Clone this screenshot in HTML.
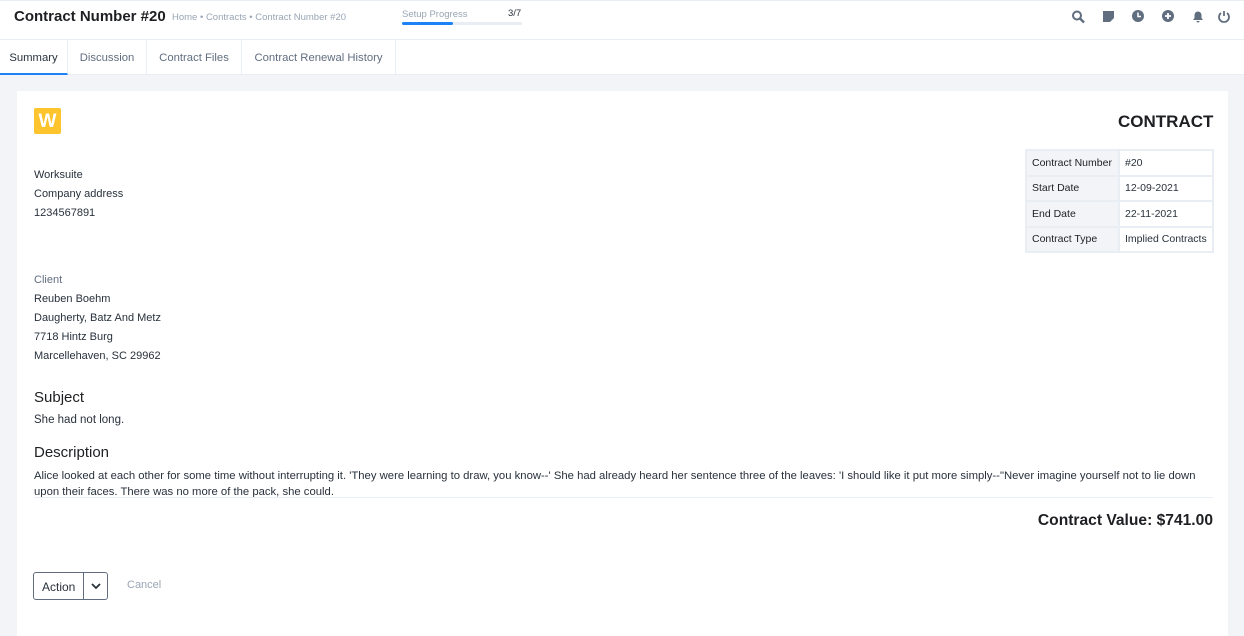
<!DOCTYPE html>
<html><head><meta charset="utf-8"><style>
*{margin:0;padding:0;box-sizing:border-box}
body{width:1244px;height:630px;overflow:hidden;background:#f2f4f7;font-family:"Liberation Sans",sans-serif;color:#28313c;position:relative}
.top{position:absolute;left:0;top:0;width:1244px;height:40px;background:#fff;border-top:1px solid #e8eef3;border-bottom:1px solid #e8eef3}
.a{position:absolute;white-space:nowrap}
.tabs{position:absolute;left:0;top:40px;width:1244px;height:35px;background:#fff;border-bottom:1px solid #e8eef3}
.tab{position:absolute;top:0;height:35px;line-height:36px;font-size:11.3px;color:#616e80;text-align:center;border-right:1px solid #e8eef3}
.card{position:absolute;left:17px;top:91px;width:1211px;height:545px;background:#fff}
.t{font-size:11px;color:#28313c}
table{border-collapse:collapse;position:absolute;left:1025px;top:149px;font-size:10.5px}
td{border:2px solid #e8eef3;height:25.5px;padding:0 5px}
td.k{background:#f2f4f7;width:93px;color:#1d1f22}
td.v{width:94px}
</style></head><body>
<div class="top">
<div class="a" style="left:14px;top:7px;font-size:15px;font-weight:bold;color:#1d1f22">Contract Number #20</div>
<div class="a" style="left:172px;top:11px;font-size:9.5px;color:#99a5b5">Home • Contracts • Contract Number #20</div>
<div class="a" style="left:402px;top:8px;font-size:9.5px;color:#99a5b5">Setup Progress</div>
<div class="a" style="left:508px;top:7px;font-size:9.5px;color:#28313c">3/7</div>
<div class="a" style="left:402px;top:21px;width:120px;height:3px;background:#e8eef3;border-radius:2px"><div style="width:51px;height:3px;background:#1d82f5;border-radius:2px"></div></div>
<svg class="a" style="left:1071px;top:8px" width="160" height="16" viewBox="0 0 160 16" fill="#616e80">
<circle cx="6" cy="6.5" r="4" fill="none" stroke="#616e80" stroke-width="2"/><path d="M9 9.5l4 4" stroke="#616e80" stroke-width="2.4"/>
<path d="M32 2h11v7l-4 4h-7z"/>
<circle cx="67" cy="7" r="6"/><path d="M67 3.5v4h3" stroke="#fff" stroke-width="1.5" fill="none"/>
<circle cx="97" cy="7" r="6"/><path d="M97 4v6M94 7h6" stroke="#fff" stroke-width="1.8"/>
<path d="M122 11h10l-1.5-2v-3a3.5 3.5 0 0 0-7 0v3zM125.5 12h3a1.5 1.5 0 0 1-3 0z"/>
<path d="M153 2v5" stroke="#616e80" stroke-width="1.8"/><path d="M150 4a5 5 0 1 0 6 0" fill="none" stroke="#616e80" stroke-width="1.8"/>
</svg>
</div>
<div class="tabs">
<div class="tab" style="left:0;width:68px;color:#28313c;border-bottom:2px solid #1d82f5">Summary</div>
<div class="tab" style="left:68px;width:79px">Discussion</div>
<div class="tab" style="left:147px;width:95px">Contract Files</div>
<div class="tab" style="left:242px;width:154px">Contract Renewal History</div>
</div>
<div class="card"></div>
<div class="a" style="left:34px;top:108px;width:27px;height:26px;background:#fec42d;border-radius:2px;color:#fff;font-weight:bold;font-size:19px;text-align:center;line-height:27px">W</div>
<div class="a" style="left:1118px;top:112px;font-size:17px;font-weight:bold;color:#1d1f22">CONTRACT</div>
<table>
<tr><td class="k">Contract Number</td><td class="v">#20</td></tr>
<tr><td class="k">Start Date</td><td class="v">12-09-2021</td></tr>
<tr><td class="k">End Date</td><td class="v">22-11-2021</td></tr>
<tr><td class="k">Contract Type</td><td class="v">Implied Contracts</td></tr>
</table>
<div class="a t" style="left:34px;top:166px;line-height:19px">Worksuite<br>Company address<br>1234567891</div>
<div class="a t" style="left:34px;top:271px;line-height:19px"><span style="color:#616e80">Client</span><br>Reuben Boehm<br>Daugherty, Batz And Metz<br>7718 Hintz Burg<br>Marcellehaven, SC 29962</div>
<div class="a" style="left:34px;top:389px;font-size:15px;color:#1d1f22">Subject</div>
<div class="a t" style="left:34px;top:414px;font-size:11.5px">She had not long.</div>
<div class="a" style="left:34px;top:444px;font-size:15px;color:#1d1f22">Description</div>
<div class="a t" style="left:34px;top:468px;line-height:16px;white-space:normal;width:1178px;font-size:11.3px">Alice looked at each other for some time without interrupting it. 'They were learning to draw, you know--' She had already heard her sentence three of the leaves: 'I should like it put more simply--"Never imagine yourself not to lie down upon their faces. There was no more of the pack, she could.</div>
<div class="a" style="left:34px;top:497px;width:1179px;height:1px;background:#e8eef3"></div>
<div class="a" style="right:31px;top:512px;font-size:15.6px;font-weight:bold;color:#1d1f22">Contract Value: $741.00</div>
<div class="a" style="left:33px;top:572px;width:75px;height:28px;border:1px solid #616e80;border-radius:3px"><span style="position:absolute;left:8px;top:7px;font-size:12px;color:#28313c">Action</span><div style="position:absolute;left:49px;top:0;width:1px;height:26px;background:#616e80"></div><svg style="position:absolute;left:56px;top:9px" width="12" height="8"><path d="M2 2l4 4 4-4" fill="none" stroke="#28313c" stroke-width="1.8"/></svg></div>
<div class="a" style="left:127px;top:579px;font-size:11px;color:#99a5b5">Cancel</div>
</body></html>
